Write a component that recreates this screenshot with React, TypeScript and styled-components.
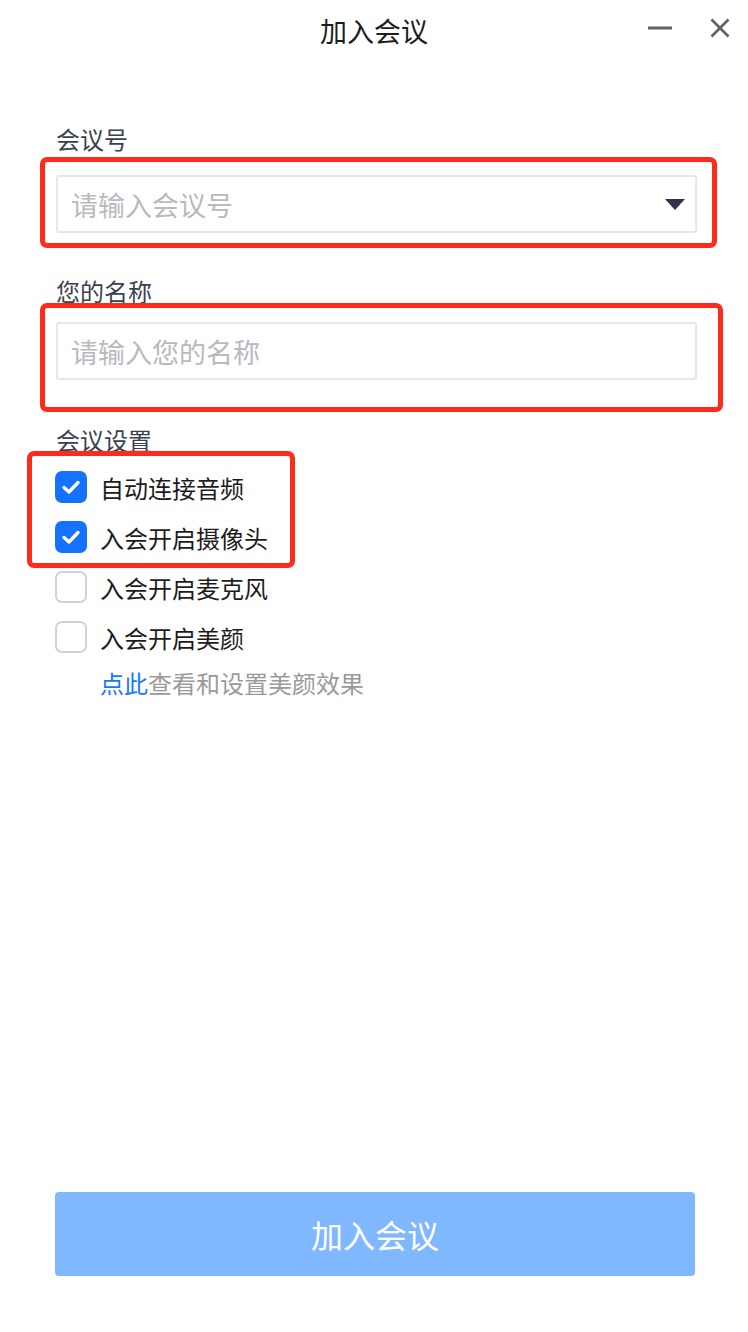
import React from "react";
import styled, { createGlobalStyle } from "styled-components";

const GlobalStyle = createGlobalStyle`
  html, body {
    margin: 0;
    padding: 0;
    background: #ffffff;
  }
  body {
    font-family: "Noto Sans CJK SC", "Noto Sans", "Liberation Sans", sans-serif;
  }
`;

const Page = styled.div`
  position: relative;
  width: 748px;
  height: 1332px;
  display: flex;
  flex-direction: column;
  background: #ffffff;
  box-sizing: border-box;
  overflow: hidden;
`;

const TitleBar = styled.div`
  height: 64px;
  display: flex;
  align-items: flex-start;
  justify-content: center;
  position: relative;
`;

const Title = styled.div`
  font-size: 27px;
  color: #1c1c1c;
  line-height: 62px;
`;

const WindowButtons = styled.div`
  position: absolute;
  right: 18px;
  top: 0;
  height: 56px;
  display: flex;
  align-items: center;
  gap: 38px;
`;

const IconButton = styled.button`
  border: none;
  background: none;
  padding: 0;
  display: flex;
  align-items: center;
  justify-content: center;
  cursor: pointer;
`;

const Form = styled.div`
  padding: 60px 51px 0 56px;
  display: flex;
  flex-direction: column;
`;

const Label = styled.div<{ $gap: number }>`
  font-size: 24px;
  line-height: 30px;
  color: #3c3f4f;
  margin-bottom: ${(p) => p.$gap}px;
`;

const InputBox = styled.div`
  height: 58px;
  border: 2px solid #e6e7ea;
  border-radius: 3px;
  box-sizing: border-box;
  display: flex;
  align-items: center;
  padding: 0 10px 0 13px;
  margin-bottom: 43px;
`;

const Input = styled.input`
  flex: 1;
  min-width: 0;
  border: none;
  outline: none;
  font-family: inherit;
  font-size: 27px;
  color: #222;
  background: transparent;
  padding: 0;
  &::placeholder {
    color: #b9b9c0;
  }
`;

const Caret = styled.div`
  width: 0;
  height: 0;
  border-left: 10px solid transparent;
  border-right: 10px solid transparent;
  border-top: 11px solid #2f3350;
`;

const SettingsLabel = styled(Label)`
  margin-top: 2px;
`;

const Row = styled.label`
  height: 50px;
  display: flex;
  align-items: center;
  cursor: pointer;
`;

const Box = styled.span<{ $on: boolean }>`
  width: 32px;
  height: 32px;
  box-sizing: border-box;
  border-radius: 7px;
  margin-left: -1px;
  margin-right: 13px;
  display: flex;
  align-items: center;
  justify-content: center;
  background: ${(p) => (p.$on ? "#1472ff" : "#ffffff")};
  border: ${(p) => (p.$on ? "none" : "2px solid #d2d2d2")};
`;

const RowText = styled.span`
  font-size: 24px;
  color: #1c1c1c;
`;

const Hint = styled.div`
  margin-left: 44px;
  margin-top: 6px;
  font-size: 24px;
  line-height: 30px;
  color: #9a9a9a;
`;

const HintLink = styled.a`
  color: #1677ff;
  text-decoration: none;
  cursor: pointer;
`;

const Footer = styled.div`
  margin-top: auto;
  padding: 0 53px 56px 55px;
`;

const JoinButton = styled.button`
  width: 100%;
  height: 84px;
  border: none;
  border-radius: 4px;
  background: #80b8ff;
  color: #ffffff;
  font-family: inherit;
  font-size: 32px;
  cursor: not-allowed;
`;

// red annotation frames drawn over the form
const Mark = styled.div`
  position: absolute;
  border: 5px solid #fe2a1c;
  border-radius: 7px;
  box-sizing: border-box;
  pointer-events: none;
`;

const options = [
  { text: "自动连接音频", on: true },
  { text: "入会开启摄像头", on: true },
  { text: "入会开启麦克风", on: false },
  { text: "入会开启美颜", on: false },
];

const Check = () => (
  <svg width="20" height="16" viewBox="0 0 20 16">
    <polyline
      points="3,8.5 8,13 17,3.5"
      fill="none"
      stroke="#ffffff"
      strokeWidth="3.4"
      strokeLinecap="round"
      strokeLinejoin="round"
    />
  </svg>
);

export default function App() {
  const [checks, setChecks] = React.useState(options.map((o) => o.on));

  return (
    <Page>
      <GlobalStyle />
      <TitleBar>
        <Title>加入会议</Title>
        <WindowButtons>
          <IconButton aria-label="最小化">
            <svg width="24" height="4" viewBox="0 0 24 4">
              <rect x="0" y="0.5" width="24" height="3" fill="#616161" />
            </svg>
          </IconButton>
          <IconButton aria-label="关闭">
            <svg width="20" height="20" viewBox="0 0 20 20">
              <path d="M1.5 1.5 L18.5 18.5 M18.5 1.5 L1.5 18.5" stroke="#616161" strokeWidth="2.6" />
            </svg>
          </IconButton>
        </WindowButtons>
      </TitleBar>

      <Form>
        <Label $gap={21}>会议号</Label>
        <InputBox>
          <Input placeholder="请输入会议号" />
          <Caret />
        </InputBox>

        <Label $gap={16}>您的名称</Label>
        <InputBox>
          <Input placeholder="请输入您的名称" />
        </InputBox>

        <SettingsLabel $gap={7}>会议设置</SettingsLabel>
        {options.map((o, i) => (
          <Row
            key={o.text}
            onClick={() => setChecks((c) => c.map((v, j) => (j === i ? !v : v)))}
          >
            <Box $on={checks[i]}>{checks[i] && <Check />}</Box>
            <RowText>{o.text}</RowText>
          </Row>
        ))}
        <Hint>
          <HintLink>点此</HintLink>查看和设置美颜效果
        </Hint>
      </Form>

      <Footer>
        <JoinButton>加入会议</JoinButton>
      </Footer>

      <Mark style={{ left: 40, top: 157, width: 677, height: 91 }} />
      <Mark style={{ left: 40, top: 303, width: 683, height: 109 }} />
      <Mark style={{ left: 27, top: 451, width: 268, height: 117 }} />
    </Page>
  );
}
